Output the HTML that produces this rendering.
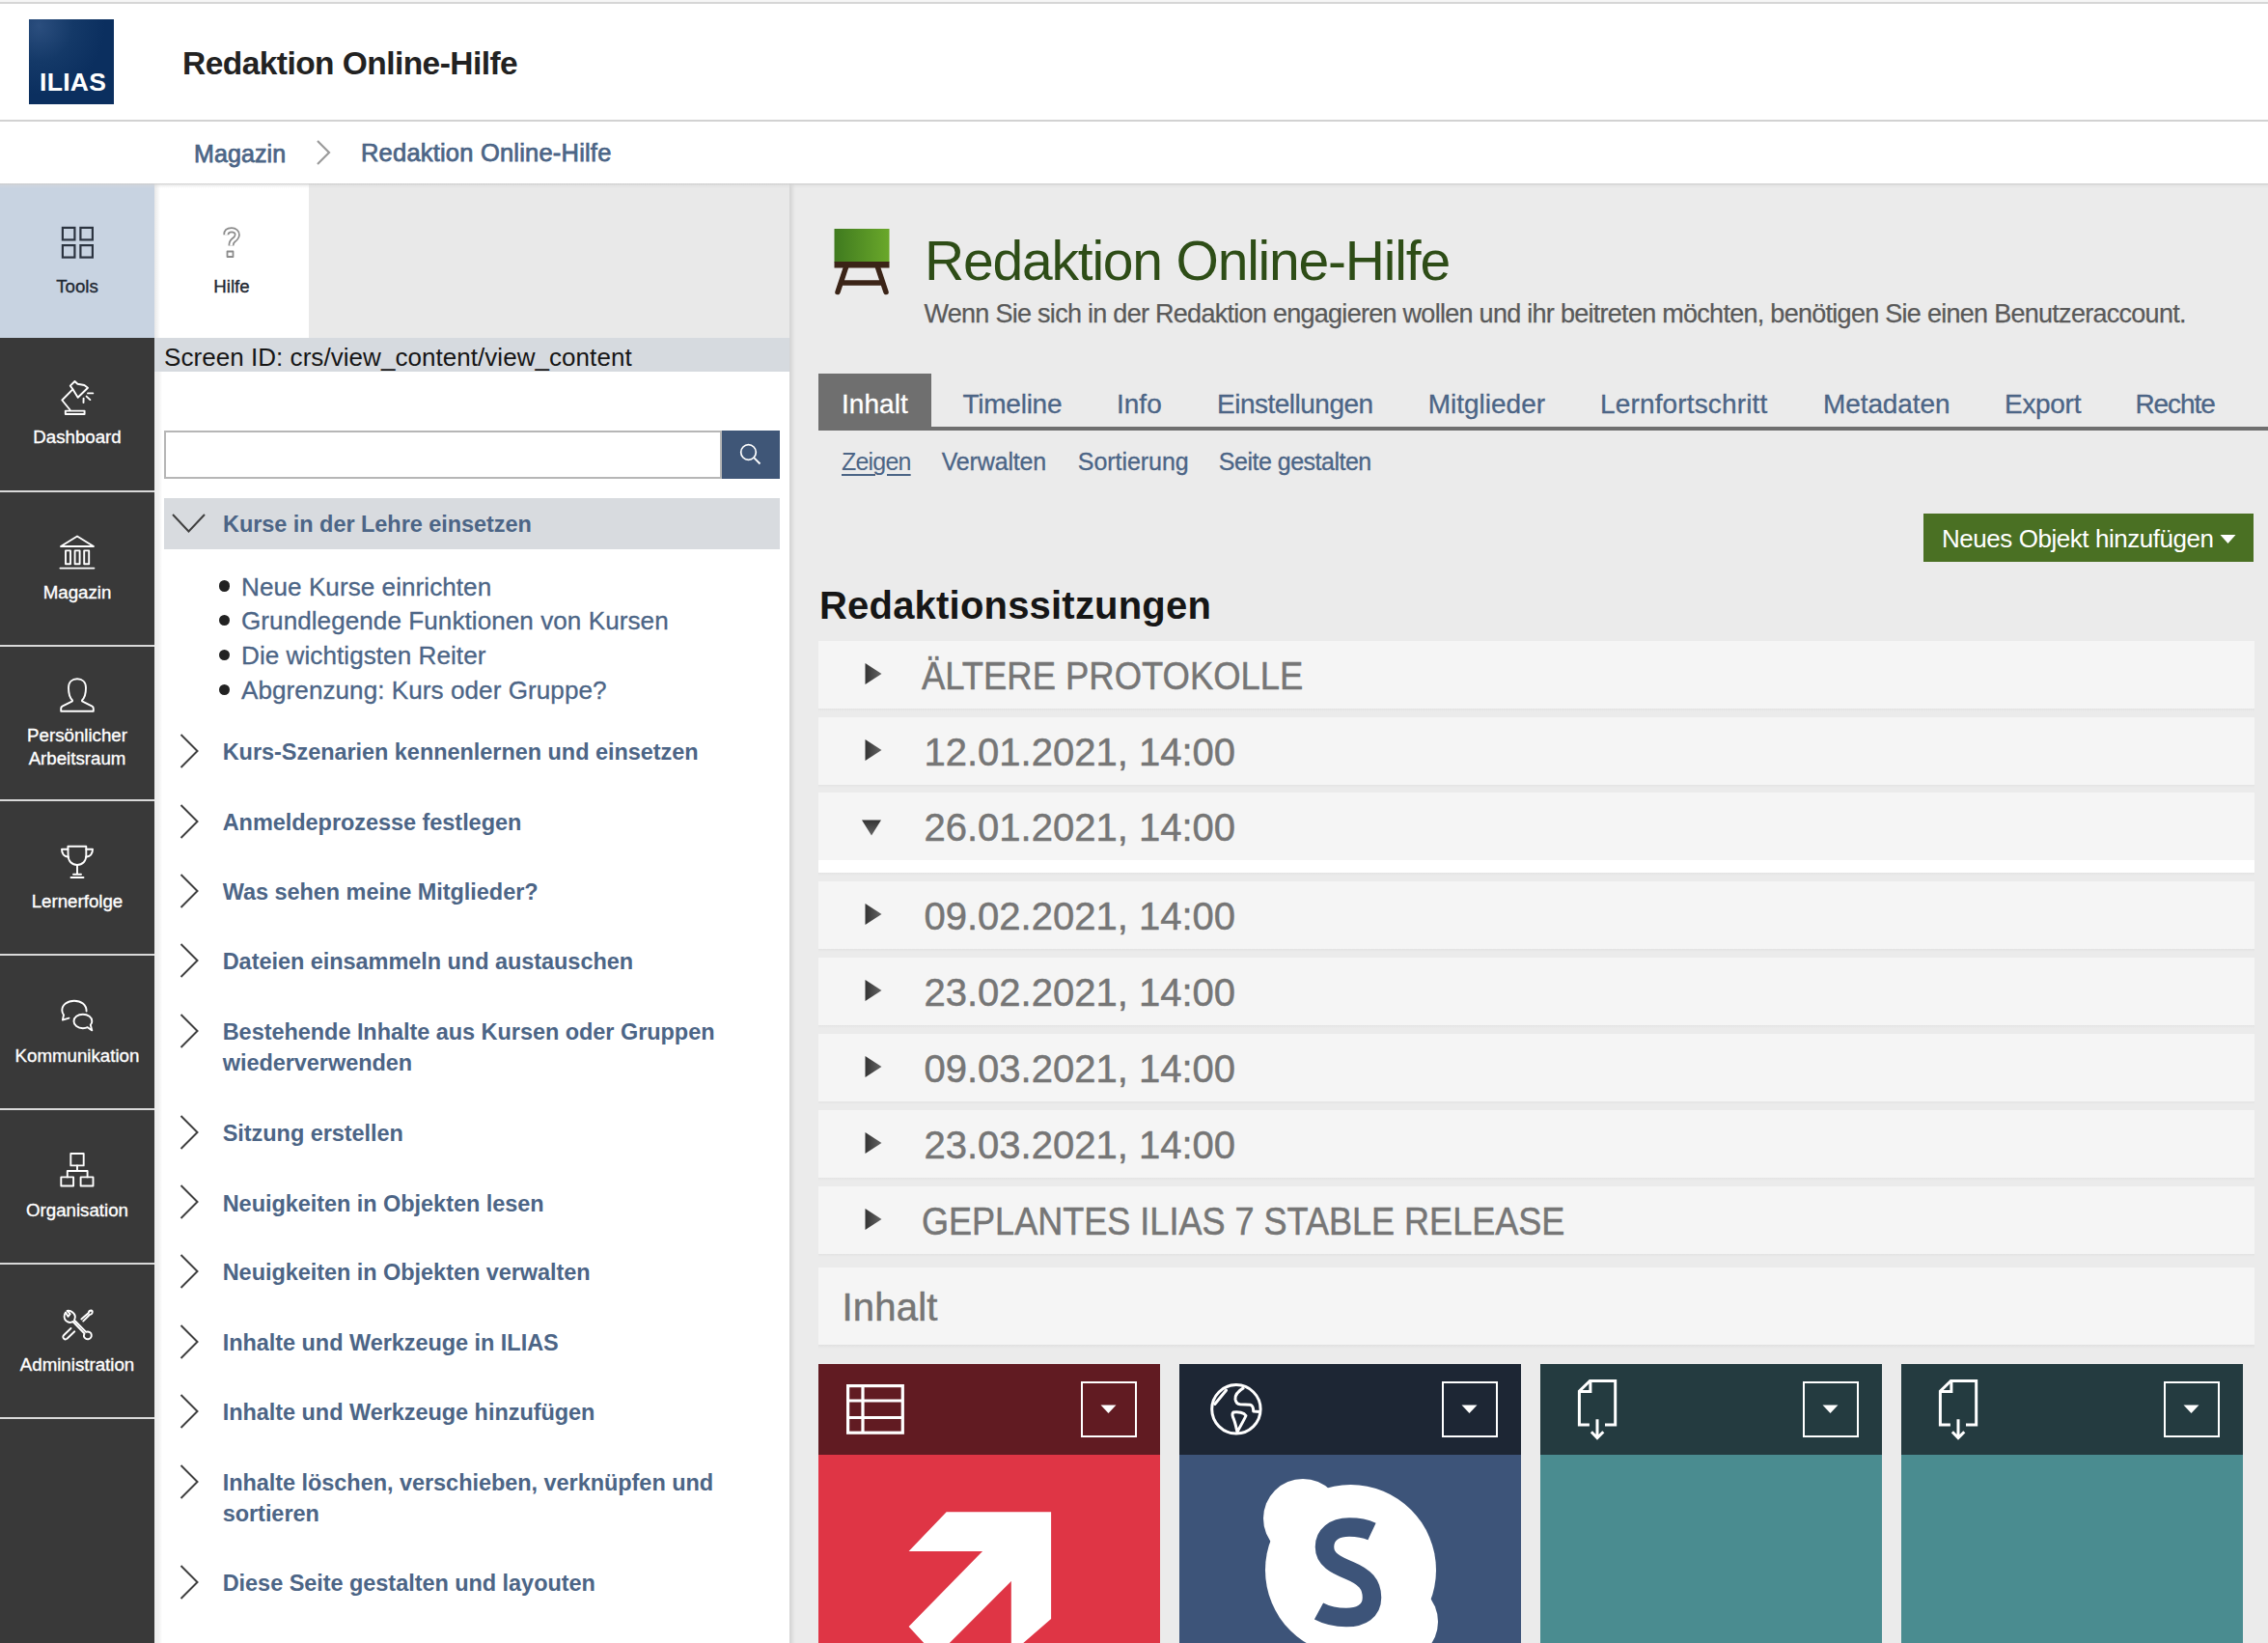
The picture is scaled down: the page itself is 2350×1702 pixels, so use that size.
<!DOCTYPE html>
<html><head><meta charset="utf-8"><title>ILIAS</title>
<style>
html,body{margin:0;padding:0;width:2350px;height:1702px;overflow:hidden;background:#ebebeb;font-family:"Liberation Sans",sans-serif;}
.t{position:absolute;white-space:nowrap;}
.r{position:absolute;}
svg.r{overflow:visible;}
</style></head><body>
<div class="r" style="left:0px;top:0px;width:2350px;height:2px;background:#f6f6f6;"></div>
<div class="r" style="left:0px;top:2px;width:2350px;height:2px;background:#d6d6d6;"></div>
<div class="r" style="left:0px;top:4px;width:2350px;height:120px;background:#ffffff;"></div>
<div class="r" style="left:0px;top:124px;width:2350px;height:2px;background:#d2d2d2;"></div>
<div class="r" style="left:0px;top:126px;width:2350px;height:64px;background:#ffffff;"></div>
<div class="r" style="left:30px;top:20px;width:88px;height:88px;background:radial-gradient(ellipse at 12% 8%, #2b4e7e 0%, #143968 32%, #0b2f5f 62%);"></div>
<div class="t" style="left:41px;top:71.9px;font-size:26.5px;line-height:26.5px;font-weight:700;color:#ffffff;letter-spacing:0.3px;">ILIAS</div>
<div class="t" style="left:189px;top:49.2px;font-size:33.5px;line-height:33.5px;font-weight:700;color:#222222;letter-spacing:-0.55px;">Redaktion Online-Hilfe</div>
<div class="t" style="left:201px;top:146.8px;font-size:25px;line-height:25px;font-weight:400;color:#4c6586;letter-spacing:0.1px;-webkit-text-stroke:0.75px #4c6586;">Magazin</div>
<svg class="r" style="left:326px;top:144px" width="20" height="28" viewBox="0 0 20 28"><polyline points="3,2 15,14 3,26" fill="none" stroke="#9b9b9b" stroke-width="2.2"/></svg>
<div class="t" style="left:374px;top:146.4px;font-size:25.5px;line-height:25.5px;font-weight:400;color:#4c6586;letter-spacing:0.2px;-webkit-text-stroke:0.75px #4c6586;">Redaktion Online-Hilfe</div>
<div class="r" style="left:0;top:190px;width:2350px;height:5px;background:linear-gradient(#cccccc,#d9d9d960 40%,#ebebeb00);z-index:5"></div>
<div class="r" style="left:0px;top:190px;width:160px;height:160px;background:#c8d3e1;"></div>
<div class="r" style="left:0px;top:350px;width:160px;height:1352px;background:#393939;"></div>
<div class="r" style="left:0px;top:508px;width:160px;height:2px;background:#d9d9d9;"></div>
<div class="r" style="left:0px;top:668px;width:160px;height:2px;background:#d9d9d9;"></div>
<div class="r" style="left:0px;top:828px;width:160px;height:2px;background:#d9d9d9;"></div>
<div class="r" style="left:0px;top:988px;width:160px;height:2px;background:#d9d9d9;"></div>
<div class="r" style="left:0px;top:1148px;width:160px;height:2px;background:#d9d9d9;"></div>
<div class="r" style="left:0px;top:1308px;width:160px;height:2px;background:#d9d9d9;"></div>
<div class="r" style="left:0px;top:1468px;width:160px;height:2px;background:#d9d9d9;"></div>
<div class="r" style="left:160px;top:190px;width:658px;height:160px;background:#e9e9e9;"></div>
<div class="r" style="left:160px;top:190px;width:160px;height:160px;background:#ffffff;"></div>
<div class="r" style="left:160px;top:350px;width:658px;height:35px;background:#d6dadf;"></div>
<div class="r" style="left:160px;top:385px;width:658px;height:1317px;background:#ffffff;"></div>
<div class="r" style="left:818px;top:190px;width:6px;height:1512px;background:linear-gradient(90deg,#d3d3d3,#ebebeb);"></div>
<div class="r" style="left:160px;top:385px;width:8px;height:1317px;background:linear-gradient(90deg,#ececec,#f2f2f2 60%,#ffffff00);"></div>
<div class="r" style="left:160px;top:190px;width:6px;height:160px;background:linear-gradient(90deg,#e8e8e8,#ffffff00);"></div>
<div class="r" style="left:824px;top:190px;width:1526px;height:1512px;background:#ebebeb;"></div>
<svg class="r" style="left:60px;top:230px" width="40" height="40" viewBox="0 0 40 40"><rect x="4.9" y="5.9" width="12.5" height="12.5" fill="none" stroke="#2c3440" stroke-width="2.2"/><rect x="23.4" y="5.9" width="12.5" height="12.5" fill="none" stroke="#2c3440" stroke-width="2.2"/><rect x="4.9" y="24.1" width="12.5" height="12.5" fill="none" stroke="#2c3440" stroke-width="2.2"/><rect x="23.4" y="24.1" width="12.5" height="12.5" fill="none" stroke="#2c3440" stroke-width="2.2"/></svg>
<div class="t" style="left:-70px;width:300px;text-align:center;top:288.0px;font-size:18.7px;line-height:18.7px;font-weight:400;color:#1f2933;letter-spacing:0px;-webkit-text-stroke-width:0.35px">Tools</div>
<svg class="r" style="left:220px;top:230px" width="40" height="40" viewBox="0 0 40 40"><g fill="none" stroke-linejoin="round"><path d="M14.3 13.2 C14.3 9.5 16.8 8.3 20 8.3 C23.5 8.3 25.8 10.3 25.8 13.2 C25.8 16 23.8 17.5 21.8 19 C20.2 20.2 19.5 21.5 19.5 24.5" stroke="#8c8c8c" stroke-width="6"/><path d="M14.3 13.2 C14.3 9.5 16.8 8.3 20 8.3 C23.5 8.3 25.8 10.3 25.8 13.2 C25.8 16 23.8 17.5 21.8 19 C20.2 20.2 19.5 21.5 19.5 24.5" stroke="#ffffff" stroke-width="2.6"/><rect x="15.5" y="30.5" width="6" height="5.5" stroke="#8c8c8c" stroke-width="1.8"/></g></svg>
<div class="t" style="left:90px;width:300px;text-align:center;top:288.0px;font-size:18.7px;line-height:18.7px;font-weight:400;color:#1f2933;letter-spacing:0px;-webkit-text-stroke-width:0.35px">Hilfe</div>
<svg class="r" style="left:50px;top:385px" width="60" height="50" viewBox="0 0 60 50"><path d="M27.5 10 L30.4 12.8 L37.4 14 L41 16.7 L30.7 26.8 L25.3 18 L22.8 14.6 Z" fill="none" stroke="#ffffff" stroke-width="1.9" stroke-linejoin="round" stroke-linecap="round"/><path d="M25.3 18.3 L14.3 29.5 L22.5 39.5" fill="none" stroke="#ffffff" stroke-width="1.9" stroke-linejoin="round" stroke-linecap="round"/><rect x="17.8" y="40.6" width="19.8" height="3.4" fill="none" stroke="#ffffff" stroke-width="1.9" stroke-linejoin="round" stroke-linecap="round"/><path d="M41 22.4 L46.3 22.4 M39.6 25.6 L43.4 29.1 M36.6 27.6 L36.5 32" fill="none" stroke="#ffffff" stroke-width="1.9" stroke-linejoin="round" stroke-linecap="round"/></svg>
<div class="t" style="left:-70px;width:300px;text-align:center;top:444.2px;font-size:18.7px;line-height:18.7px;font-weight:400;color:#ffffff;letter-spacing:0px;-webkit-text-stroke-width:0.35px">Dashboard</div>
<svg class="r" style="left:50px;top:545px" width="60" height="50" viewBox="0 0 60 50"><path d="M13 21 L30 10.5 L47 21 Z" fill="none" stroke="#ffffff" stroke-width="1.9" stroke-linejoin="round" stroke-linecap="round"/><rect x="18" y="25.4" width="5" height="13.8" fill="none" stroke="#ffffff" stroke-width="1.9" stroke-linejoin="round" stroke-linecap="round"/><rect x="27.6" y="25.4" width="5" height="13.8" fill="none" stroke="#ffffff" stroke-width="1.9" stroke-linejoin="round" stroke-linecap="round"/><rect x="37.2" y="25.4" width="5" height="13.8" fill="none" stroke="#ffffff" stroke-width="1.9" stroke-linejoin="round" stroke-linecap="round"/><path d="M12.4 43.6 L47.4 43.6" fill="none" stroke="#ffffff" stroke-width="1.9" stroke-linejoin="round" stroke-linecap="round"/></svg>
<div class="t" style="left:-70px;width:300px;text-align:center;top:605.2px;font-size:18.7px;line-height:18.7px;font-weight:400;color:#ffffff;letter-spacing:0px;-webkit-text-stroke-width:0.35px">Magazin</div>
<svg class="r" style="left:50px;top:695px" width="60" height="50" viewBox="0 0 60 50"><path d="M25 30.5 C22 27.5 21 23 21 17.5 C21 11.5 24.8 8.3 30 8.3 C35.2 8.3 39 11.5 39 17.5 C39 23 38 27.5 35 30.5 L35 31.3 L45.5 36.6 C46.5 37.2 46.8 38 46.8 39 L46.8 41.7 L13.2 41.7 L13.2 39 C13.2 38 13.5 37.2 14.5 36.6 L25 31.3 Z" fill="none" stroke="#ffffff" stroke-width="1.9" stroke-linejoin="round" stroke-linecap="round"/></svg>
<div class="t" style="left:-70px;width:300px;text-align:center;top:753.2px;font-size:18.7px;line-height:18.7px;font-weight:400;color:#ffffff;letter-spacing:0px;-webkit-text-stroke-width:0.35px">Persönlicher</div>
<div class="t" style="left:-70px;width:300px;text-align:center;top:776.7px;font-size:18.7px;line-height:18.7px;font-weight:400;color:#ffffff;letter-spacing:0px;-webkit-text-stroke-width:0.35px">Arbeitsraum</div>
<svg class="r" style="left:50px;top:860px" width="60" height="55" viewBox="0 0 60 55"><path d="M20.4 16.7 L39.3 16.7 L39.3 26 C39.3 32 35.5 36 30 36 C24.5 36 20.6 32 20.6 26 Z" fill="none" stroke="#ffffff" stroke-width="1.9" stroke-linejoin="round" stroke-linecap="round"/><path d="M20.5 19.8 L14 19.8 C14 24 16 27 20.6 27.8 M39.3 19.8 L46 19.8 C46 24 44 27 39.3 27.8" fill="none" stroke="#ffffff" stroke-width="1.9" stroke-linejoin="round" stroke-linecap="round"/><path d="M30 36 L30 45.5 M26 45.7 L34 45.7 M23.5 49 L36.5 49" fill="none" stroke="#ffffff" stroke-width="1.9" stroke-linejoin="round" stroke-linecap="round"/></svg>
<div class="t" style="left:-70px;width:300px;text-align:center;top:925.0px;font-size:18.7px;line-height:18.7px;font-weight:400;color:#ffffff;letter-spacing:0px;-webkit-text-stroke-width:0.35px">Lernerfolge</div>
<svg class="r" style="left:50px;top:1025px" width="60" height="50" viewBox="0 0 60 50"><path d="M39.6 22.5 C39.6 15.8 34 11.7 26.9 11.7 C19.8 11.7 14.3 16 14.3 21.5 C14.3 23.5 15 25 16 26.3 L14.9 31.6 L21.5 29.6" fill="none" stroke="#ffffff" stroke-width="1.9" stroke-linejoin="round" stroke-linecap="round"/><path d="M40.8 39.2 C39.2 40 37.5 40.2 35.9 40.2 C30.5 40.2 26.5 37 26.5 32.9 C26.5 28.8 30.5 25.8 35.9 25.8 C41.2 25.8 45.3 28.8 45.3 32.9 C45.3 34.6 44.6 35.8 43.8 36.7 L45.3 42.4 Z" fill="none" stroke="#ffffff" stroke-width="1.9" stroke-linejoin="round" stroke-linecap="round"/></svg>
<div class="t" style="left:-70px;width:300px;text-align:center;top:1085.2px;font-size:18.7px;line-height:18.7px;font-weight:400;color:#ffffff;letter-spacing:0px;-webkit-text-stroke-width:0.35px">Kommunikation</div>
<svg class="r" style="left:20px;top:1180px" width="120" height="60" viewBox="0 0 120 60"><rect x="53.3" y="15" width="13.4" height="12.4" fill="none" stroke="#ffffff" stroke-width="1.9" stroke-linejoin="round" stroke-linecap="round"/><path d="M60 27.4 L60 33 M49.8 39.4 L49.8 33 L70.6 33 L70.6 39.4" fill="none" stroke="#ffffff" stroke-width="1.9" stroke-linejoin="round" stroke-linecap="round"/><rect x="43.3" y="39.4" width="12.8" height="9.1" fill="none" stroke="#ffffff" stroke-width="1.9" stroke-linejoin="round" stroke-linecap="round"/><rect x="63.6" y="39.4" width="12.9" height="9.1" fill="none" stroke="#ffffff" stroke-width="1.9" stroke-linejoin="round" stroke-linecap="round"/></svg>
<div class="t" style="left:-70px;width:300px;text-align:center;top:1244.7px;font-size:18.7px;line-height:18.7px;font-weight:400;color:#ffffff;letter-spacing:0px;-webkit-text-stroke-width:0.35px">Organisation</div>
<svg class="r" style="left:20px;top:1340px" width="120" height="60" viewBox="0 0 120 60"><path d="M48 19.5 C46 22 46 26 48.5 28.3 C51 30.3 54 30 55.5 29 L67.5 41.5 C66.5 43.5 67 45.5 68.5 46.5 C70.3 47.8 72.8 47.5 74 45.8 C75.3 44 75 41.5 73.3 40.3 C72 39.4 70.5 39.2 69.2 39.8 L57 27.5 C58.3 25 57.8 21.6 55.3 19.5 C53.4 17.8 51.4 17.3 49.5 17.8 L52.7 21.2 L50.5 23.8 Z" fill="none" stroke="#ffffff" stroke-width="1.9" stroke-linejoin="round" stroke-linecap="round"/><path d="M64.3 26.5 L71.8 20 C72 18.5 73 17.5 74.5 17.5 C75.5 17.8 76 18.6 75.6 20 C75.2 21.3 74 22 72.8 22 L66.2 28.6" fill="none" stroke="#ffffff" stroke-width="1.9" stroke-linejoin="round" stroke-linecap="round"/><path d="M53.5 36 L46 43.2 C45 44.2 45 45.8 46.2 46.8 C47.2 47.7 48.6 47.6 49.5 46.7 L57.3 39.3" fill="none" stroke="#ffffff" stroke-width="1.9" stroke-linejoin="round" stroke-linecap="round"/></svg>
<div class="t" style="left:-70px;width:300px;text-align:center;top:1405.0px;font-size:18.7px;line-height:18.7px;font-weight:400;color:#ffffff;letter-spacing:0px;-webkit-text-stroke-width:0.35px">Administration</div>
<div class="t" style="left:170px;top:356.5px;font-size:26px;line-height:26px;font-weight:400;color:#161616;letter-spacing:0.05px;">Screen ID: crs/view_content/view_content</div>
<div class="r" style="left:170px;top:446px;width:574px;height:46px;border:2px solid #b6b6b6;background:#fff"></div>
<div class="r" style="left:748px;top:446px;width:60px;height:50px;background:#3f5677;"></div>
<svg class="r" style="left:763px;top:456px" width="30" height="30" viewBox="0 0 30 30"><circle cx="12.5" cy="12.5" r="7.8" fill="none" stroke="#fff" stroke-width="1.7"/><path d="M18.2 18.2 L24.5 24.5" stroke="#fff" stroke-width="1.9"/></svg>
<div class="r" style="left:170px;top:516px;width:638px;height:53px;background:#d8dbdf;"></div>
<svg class="r" style="left:176px;top:528px" width="40" height="30" viewBox="0 0 40 30"><polyline points="3,5 19.5,22.5 36,5" fill="none" stroke="#404040" stroke-width="2"/></svg>
<div class="t" style="left:231px;top:532.1px;font-size:23.5px;line-height:23.5px;font-weight:700;color:#4c6586;letter-spacing:-0.05px;">Kurse in der Lehre einsetzen</div>
<div class="r" style="left:226.5px;top:601.1px;width:11.5px;height:11.5px;border-radius:50%;background:#222"></div>
<div class="t" style="left:250px;top:594.5px;font-size:26.1px;line-height:26.1px;font-weight:400;color:#4c6586;letter-spacing:0.05px;-webkit-text-stroke-width:0.3px;">Neue Kurse einrichten</div>
<div class="r" style="left:226.5px;top:636.9px;width:11.5px;height:11.5px;border-radius:50%;background:#222"></div>
<div class="t" style="left:250px;top:630.3px;font-size:26.1px;line-height:26.1px;font-weight:400;color:#4c6586;letter-spacing:0.05px;-webkit-text-stroke-width:0.3px;">Grundlegende Funktionen von Kursen</div>
<div class="r" style="left:226.5px;top:672.7px;width:11.5px;height:11.5px;border-radius:50%;background:#222"></div>
<div class="t" style="left:250px;top:666.1px;font-size:26.1px;line-height:26.1px;font-weight:400;color:#4c6586;letter-spacing:0.05px;-webkit-text-stroke-width:0.3px;">Die wichtigsten Reiter</div>
<div class="r" style="left:226.5px;top:708.5px;width:11.5px;height:11.5px;border-radius:50%;background:#222"></div>
<div class="t" style="left:250px;top:701.9px;font-size:26.1px;line-height:26.1px;font-weight:400;color:#4c6586;letter-spacing:0.05px;-webkit-text-stroke-width:0.3px;">Abgrenzung: Kurs oder Gruppe?</div>
<svg class="r" style="left:183px;top:758.3px" width="28" height="40" viewBox="0 0 28 40"><polyline points="4.5,3 21.5,20 4.5,37" fill="none" stroke="#404040" stroke-width="2"/></svg>
<div class="t" style="left:230.7px;top:768.4px;font-size:23.5px;line-height:23.5px;font-weight:700;color:#4c6586;letter-spacing:-0.05px;">Kurs-Szenarien kennenlernen und einsetzen</div>
<svg class="r" style="left:183px;top:831px" width="28" height="40" viewBox="0 0 28 40"><polyline points="4.5,3 21.5,20 4.5,37" fill="none" stroke="#404040" stroke-width="2"/></svg>
<div class="t" style="left:230.7px;top:841.1px;font-size:23.5px;line-height:23.5px;font-weight:700;color:#4c6586;letter-spacing:-0.05px;">Anmeldeprozesse festlegen</div>
<svg class="r" style="left:183px;top:903.2px" width="28" height="40" viewBox="0 0 28 40"><polyline points="4.5,3 21.5,20 4.5,37" fill="none" stroke="#404040" stroke-width="2"/></svg>
<div class="t" style="left:230.7px;top:913.3px;font-size:23.5px;line-height:23.5px;font-weight:700;color:#4c6586;letter-spacing:-0.05px;">Was sehen meine Mitglieder?</div>
<svg class="r" style="left:183px;top:975px" width="28" height="40" viewBox="0 0 28 40"><polyline points="4.5,3 21.5,20 4.5,37" fill="none" stroke="#404040" stroke-width="2"/></svg>
<div class="t" style="left:230.7px;top:985.1px;font-size:23.5px;line-height:23.5px;font-weight:700;color:#4c6586;letter-spacing:-0.05px;">Dateien einsammeln und austauschen</div>
<svg class="r" style="left:183px;top:1048px" width="28" height="40" viewBox="0 0 28 40"><polyline points="4.5,3 21.5,20 4.5,37" fill="none" stroke="#404040" stroke-width="2"/></svg>
<div class="t" style="left:230.7px;top:1058.1px;font-size:23.5px;line-height:23.5px;font-weight:700;color:#4c6586;letter-spacing:-0.05px;">Bestehende Inhalte aus Kursen oder Gruppen</div>
<div class="t" style="left:230.7px;top:1090.1px;font-size:23.5px;line-height:23.5px;font-weight:700;color:#4c6586;letter-spacing:-0.05px;">wiederverwenden</div>
<svg class="r" style="left:183px;top:1152.6px" width="28" height="40" viewBox="0 0 28 40"><polyline points="4.5,3 21.5,20 4.5,37" fill="none" stroke="#404040" stroke-width="2"/></svg>
<div class="t" style="left:230.7px;top:1162.7px;font-size:23.5px;line-height:23.5px;font-weight:700;color:#4c6586;letter-spacing:-0.05px;">Sitzung erstellen</div>
<svg class="r" style="left:183px;top:1225.4px" width="28" height="40" viewBox="0 0 28 40"><polyline points="4.5,3 21.5,20 4.5,37" fill="none" stroke="#404040" stroke-width="2"/></svg>
<div class="t" style="left:230.7px;top:1235.5px;font-size:23.5px;line-height:23.5px;font-weight:700;color:#4c6586;letter-spacing:-0.05px;">Neuigkeiten in Objekten lesen</div>
<svg class="r" style="left:183px;top:1297.3px" width="28" height="40" viewBox="0 0 28 40"><polyline points="4.5,3 21.5,20 4.5,37" fill="none" stroke="#404040" stroke-width="2"/></svg>
<div class="t" style="left:230.7px;top:1307.4px;font-size:23.5px;line-height:23.5px;font-weight:700;color:#4c6586;letter-spacing:-0.05px;">Neuigkeiten in Objekten verwalten</div>
<svg class="r" style="left:183px;top:1369.7px" width="28" height="40" viewBox="0 0 28 40"><polyline points="4.5,3 21.5,20 4.5,37" fill="none" stroke="#404040" stroke-width="2"/></svg>
<div class="t" style="left:230.7px;top:1379.8px;font-size:23.5px;line-height:23.5px;font-weight:700;color:#4c6586;letter-spacing:-0.05px;">Inhalte und Werkzeuge in ILIAS</div>
<svg class="r" style="left:183px;top:1441.5px" width="28" height="40" viewBox="0 0 28 40"><polyline points="4.5,3 21.5,20 4.5,37" fill="none" stroke="#404040" stroke-width="2"/></svg>
<div class="t" style="left:230.7px;top:1451.6px;font-size:23.5px;line-height:23.5px;font-weight:700;color:#4c6586;letter-spacing:-0.05px;">Inhalte und Werkzeuge hinzufügen</div>
<svg class="r" style="left:183px;top:1515px" width="28" height="40" viewBox="0 0 28 40"><polyline points="4.5,3 21.5,20 4.5,37" fill="none" stroke="#404040" stroke-width="2"/></svg>
<div class="t" style="left:230.7px;top:1525.1px;font-size:23.5px;line-height:23.5px;font-weight:700;color:#4c6586;letter-spacing:-0.05px;">Inhalte löschen, verschieben, verknüpfen und</div>
<div class="t" style="left:230.7px;top:1557.1px;font-size:23.5px;line-height:23.5px;font-weight:700;color:#4c6586;letter-spacing:-0.05px;">sortieren</div>
<svg class="r" style="left:183px;top:1618.5px" width="28" height="40" viewBox="0 0 28 40"><polyline points="4.5,3 21.5,20 4.5,37" fill="none" stroke="#404040" stroke-width="2"/></svg>
<div class="t" style="left:230.7px;top:1628.6px;font-size:23.5px;line-height:23.5px;font-weight:700;color:#4c6586;letter-spacing:-0.05px;">Diese Seite gestalten und layouten</div>
<svg class="r" style="left:860px;top:232px" width="66" height="78" viewBox="0 0 66 78"><defs><linearGradient id="gb" x1="0" x2="1" y1="0" y2="0"><stop offset="0" stop-color="#3f7a1f"/><stop offset="1" stop-color="#6aa82a"/></linearGradient></defs><rect x="4.5" y="5" width="57" height="34.5" fill="url(#gb)"/><rect x="4.5" y="39" width="57" height="6.5" fill="#3b2417"/><path d="M16.5 45 L8 70.5 M49.5 45 L58 70.5 M12 61 L54 61" stroke="#3b2417" stroke-width="5.5" stroke-linecap="round" fill="none"/></svg>
<div class="t" style="left:958px;top:241.7px;font-size:57px;line-height:57px;font-weight:400;color:#2e4d17;letter-spacing:-1.2px;">Redaktion Online-Hilfe</div>
<div class="t" style="left:957.5px;top:312.1px;font-size:27px;line-height:27px;font-weight:400;color:#5a5a5a;letter-spacing:-0.72px;-webkit-text-stroke-width:0.25px;">Wenn Sie sich in der Redaktion engagieren wollen und ihr beitreten möchten, benötigen Sie einen Benutzeraccount.</div>
<div class="r" style="left:848px;top:387px;width:117px;height:56px;background:#6f6f6f;"></div>
<div class="r" style="left:848px;top:442px;width:1502px;height:4px;background:#6f6f6f;"></div>
<div class="t" style="left:872px;top:404.7px;font-size:28px;line-height:28px;font-weight:400;color:#ffffff;letter-spacing:0.05px;-webkit-text-stroke-width:0.3px;">Inhalt</div>
<div class="t" style="left:997.5px;top:404.7px;font-size:28px;line-height:28px;font-weight:400;color:#4c6586;letter-spacing:-0.25px;-webkit-text-stroke-width:0.3px;">Timeline</div>
<div class="t" style="left:1157px;top:404.7px;font-size:28px;line-height:28px;font-weight:400;color:#4c6586;letter-spacing:0px;-webkit-text-stroke-width:0.3px;">Info</div>
<div class="t" style="left:1261px;top:404.7px;font-size:28px;line-height:28px;font-weight:400;color:#4c6586;letter-spacing:-0.5px;-webkit-text-stroke-width:0.3px;">Einstellungen</div>
<div class="t" style="left:1479.7px;top:404.7px;font-size:28px;line-height:28px;font-weight:400;color:#4c6586;letter-spacing:0px;-webkit-text-stroke-width:0.3px;">Mitglieder</div>
<div class="t" style="left:1658px;top:404.7px;font-size:28px;line-height:28px;font-weight:400;color:#4c6586;letter-spacing:0.15px;-webkit-text-stroke-width:0.3px;">Lernfortschritt</div>
<div class="t" style="left:1889px;top:404.7px;font-size:28px;line-height:28px;font-weight:400;color:#4c6586;letter-spacing:-0.1px;-webkit-text-stroke-width:0.3px;">Metadaten</div>
<div class="t" style="left:2077px;top:404.7px;font-size:28px;line-height:28px;font-weight:400;color:#4c6586;letter-spacing:-0.3px;-webkit-text-stroke-width:0.3px;">Export</div>
<div class="t" style="left:2212.5px;top:404.7px;font-size:28px;line-height:28px;font-weight:400;color:#4c6586;letter-spacing:-1.1px;-webkit-text-stroke-width:0.3px;">Rechte</div>
<div class="t" style="left:872px;top:466.4px;font-size:25px;line-height:25px;font-weight:400;color:#4c6586;letter-spacing:-0.8px;text-decoration:underline;text-underline-offset:4px;text-decoration-thickness:1.5px;">Zeigen</div>
<div class="t" style="left:975.7px;top:466.4px;font-size:25px;line-height:25px;font-weight:400;color:#4c6586;letter-spacing:-0.15px;-webkit-text-stroke-width:0.3px;">Verwalten</div>
<div class="t" style="left:1116.8px;top:466.4px;font-size:25px;line-height:25px;font-weight:400;color:#4c6586;letter-spacing:-0.05px;-webkit-text-stroke-width:0.3px;">Sortierung</div>
<div class="t" style="left:1262.8px;top:466.4px;font-size:25px;line-height:25px;font-weight:400;color:#4c6586;letter-spacing:-0.5px;-webkit-text-stroke-width:0.3px;">Seite gestalten</div>
<div class="r" style="left:1993px;top:532px;width:342px;height:49.5px;background:#4a7023;"></div>
<div class="t" style="left:2012px;top:544.5px;font-size:26px;line-height:26px;font-weight:400;color:#ffffff;letter-spacing:-0.45px;">Neues Objekt hinzufügen</div>
<svg class="r" style="left:2300px;top:553px" width="17" height="11" viewBox="0 0 17 11"><path d="M0.5 1 L16.5 1 L8.5 10 Z" fill="#fff"/></svg>
<div class="t" style="left:849px;top:607.1px;font-size:40px;line-height:40px;font-weight:700;color:#161616;letter-spacing:0.2px;">Redaktionssitzungen</div>
<div class="r" style="left:848px;top:664px;width:1488px;height:69.5px;background:#f5f5f5;"></div>
<div class="r" style="left:848px;top:733.5px;width:1488px;height:3px;background:linear-gradient(#e3e3e3,#ebebeb)"></div>
<svg class="r" style="left:895px;top:686px" width="20" height="24" viewBox="0 0 20 24"><defs><linearGradient id="tg664" x1="0" x2="1" y1="0" y2="0"><stop offset="0" stop-color="#333"/><stop offset="1" stop-color="#666"/></linearGradient></defs><path d="M1.5 1 L18.5 12 L1.5 23 Z" fill="url(#tg664)"/></svg>
<div class="t" style="left:955px;top:679.8px;font-size:40px;line-height:40px;font-weight:400;color:#767676;letter-spacing:0px;transform:scaleX(0.9104);transform-origin:0 0;-webkit-text-stroke-width:0.5px;">ÄLTERE PROTOKOLLE</div>
<div class="r" style="left:848px;top:743px;width:1488px;height:69.5px;background:#f5f5f5;"></div>
<div class="r" style="left:848px;top:812.5px;width:1488px;height:3px;background:linear-gradient(#e3e3e3,#ebebeb)"></div>
<svg class="r" style="left:895px;top:765px" width="20" height="24" viewBox="0 0 20 24"><defs><linearGradient id="tg743" x1="0" x2="1" y1="0" y2="0"><stop offset="0" stop-color="#333"/><stop offset="1" stop-color="#666"/></linearGradient></defs><path d="M1.5 1 L18.5 12 L1.5 23 Z" fill="url(#tg743)"/></svg>
<div class="t" style="left:957.5px;top:759.1px;font-size:40px;line-height:40px;font-weight:400;color:#767676;letter-spacing:0.0px;-webkit-text-stroke-width:0.5px;">12.01.2021, 14:00</div>
<div class="r" style="left:848px;top:821px;width:1488px;height:69.5px;background:#f5f5f5;"></div>
<div class="r" style="left:848px;top:890.5px;width:1488px;height:13px;background:#ffffff;"></div>
<div class="r" style="left:848px;top:903.5px;width:1488px;height:3px;background:linear-gradient(#e3e3e3,#ebebeb)"></div>
<svg class="r" style="left:892px;top:848px" width="22" height="18" viewBox="0 0 22 18"><defs><linearGradient id="tg821" x1="0" x2="0" y1="0" y2="1"><stop offset="0" stop-color="#333"/><stop offset="1" stop-color="#666"/></linearGradient></defs><path d="M1 1.5 L21 1.5 L11 17.5 Z" fill="url(#tg821)"/></svg>
<div class="t" style="left:957.5px;top:837.1px;font-size:40px;line-height:40px;font-weight:400;color:#767676;letter-spacing:0.0px;-webkit-text-stroke-width:0.5px;">26.01.2021, 14:00</div>
<div class="r" style="left:848px;top:913px;width:1488px;height:69.5px;background:#f5f5f5;"></div>
<div class="r" style="left:848px;top:982.5px;width:1488px;height:3px;background:linear-gradient(#e3e3e3,#ebebeb)"></div>
<svg class="r" style="left:895px;top:935px" width="20" height="24" viewBox="0 0 20 24"><defs><linearGradient id="tg913" x1="0" x2="1" y1="0" y2="0"><stop offset="0" stop-color="#333"/><stop offset="1" stop-color="#666"/></linearGradient></defs><path d="M1.5 1 L18.5 12 L1.5 23 Z" fill="url(#tg913)"/></svg>
<div class="t" style="left:957.5px;top:929.1px;font-size:40px;line-height:40px;font-weight:400;color:#767676;letter-spacing:0.0px;-webkit-text-stroke-width:0.5px;">09.02.2021, 14:00</div>
<div class="r" style="left:848px;top:992px;width:1488px;height:69.5px;background:#f5f5f5;"></div>
<div class="r" style="left:848px;top:1061.5px;width:1488px;height:3px;background:linear-gradient(#e3e3e3,#ebebeb)"></div>
<svg class="r" style="left:895px;top:1014px" width="20" height="24" viewBox="0 0 20 24"><defs><linearGradient id="tg992" x1="0" x2="1" y1="0" y2="0"><stop offset="0" stop-color="#333"/><stop offset="1" stop-color="#666"/></linearGradient></defs><path d="M1.5 1 L18.5 12 L1.5 23 Z" fill="url(#tg992)"/></svg>
<div class="t" style="left:957.5px;top:1008.1px;font-size:40px;line-height:40px;font-weight:400;color:#767676;letter-spacing:0.0px;-webkit-text-stroke-width:0.5px;">23.02.2021, 14:00</div>
<div class="r" style="left:848px;top:1071px;width:1488px;height:69.5px;background:#f5f5f5;"></div>
<div class="r" style="left:848px;top:1140.5px;width:1488px;height:3px;background:linear-gradient(#e3e3e3,#ebebeb)"></div>
<svg class="r" style="left:895px;top:1093px" width="20" height="24" viewBox="0 0 20 24"><defs><linearGradient id="tg1071" x1="0" x2="1" y1="0" y2="0"><stop offset="0" stop-color="#333"/><stop offset="1" stop-color="#666"/></linearGradient></defs><path d="M1.5 1 L18.5 12 L1.5 23 Z" fill="url(#tg1071)"/></svg>
<div class="t" style="left:957.5px;top:1087.1px;font-size:40px;line-height:40px;font-weight:400;color:#767676;letter-spacing:0.0px;-webkit-text-stroke-width:0.5px;">09.03.2021, 14:00</div>
<div class="r" style="left:848px;top:1150px;width:1488px;height:69.5px;background:#f5f5f5;"></div>
<div class="r" style="left:848px;top:1219.5px;width:1488px;height:3px;background:linear-gradient(#e3e3e3,#ebebeb)"></div>
<svg class="r" style="left:895px;top:1172px" width="20" height="24" viewBox="0 0 20 24"><defs><linearGradient id="tg1150" x1="0" x2="1" y1="0" y2="0"><stop offset="0" stop-color="#333"/><stop offset="1" stop-color="#666"/></linearGradient></defs><path d="M1.5 1 L18.5 12 L1.5 23 Z" fill="url(#tg1150)"/></svg>
<div class="t" style="left:957.5px;top:1166.1px;font-size:40px;line-height:40px;font-weight:400;color:#767676;letter-spacing:0.0px;-webkit-text-stroke-width:0.5px;">23.03.2021, 14:00</div>
<div class="r" style="left:848px;top:1229px;width:1488px;height:69.5px;background:#f5f5f5;"></div>
<div class="r" style="left:848px;top:1298.5px;width:1488px;height:3px;background:linear-gradient(#e3e3e3,#ebebeb)"></div>
<svg class="r" style="left:895px;top:1251px" width="20" height="24" viewBox="0 0 20 24"><defs><linearGradient id="tg1229" x1="0" x2="1" y1="0" y2="0"><stop offset="0" stop-color="#333"/><stop offset="1" stop-color="#666"/></linearGradient></defs><path d="M1.5 1 L18.5 12 L1.5 23 Z" fill="url(#tg1229)"/></svg>
<div class="t" style="left:955px;top:1244.8px;font-size:40px;line-height:40px;font-weight:400;color:#767676;letter-spacing:0px;transform:scaleX(0.901);transform-origin:0 0;-webkit-text-stroke-width:0.5px;">GEPLANTES ILIAS 7 STABLE RELEASE</div>
<div class="r" style="left:848px;top:1312.5px;width:1488px;height:80.5px;background:#f5f5f5;"></div>
<div class="r" style="left:848px;top:1393px;width:1488px;height:4px;background:linear-gradient(#e0e0e0,#ebebeb)"></div>
<div class="t" style="left:872.5px;top:1334.1px;font-size:40px;line-height:40px;font-weight:400;color:#767676;letter-spacing:0.2px;-webkit-text-stroke-width:0.5px;">Inhalt</div>
<div class="r" style="left:848px;top:1413px;width:354px;height:94px;background:#611b22;"></div>
<div class="r" style="left:848px;top:1507px;width:354px;height:195px;background:#df3545;"></div>
<div class="r" style="left:1120px;top:1431px;width:54px;height:54px;border:2px solid #fff"></div>
<svg class="r" style="left:1140px;top:1455px" width="17" height="10" viewBox="0 0 17 10"><path d="M0.5 0.5 L16.5 0.5 L8.5 9 Z" fill="#fff"/></svg>
<div class="r" style="left:1222px;top:1413px;width:354px;height:94px;background:#1d2634;"></div>
<div class="r" style="left:1222px;top:1507px;width:354px;height:195px;background:#3d5479;"></div>
<div class="r" style="left:1494px;top:1431px;width:54px;height:54px;border:2px solid #fff"></div>
<svg class="r" style="left:1514px;top:1455px" width="17" height="10" viewBox="0 0 17 10"><path d="M0.5 0.5 L16.5 0.5 L8.5 9 Z" fill="#fff"/></svg>
<div class="r" style="left:1596px;top:1413px;width:354px;height:94px;background:#243b40;"></div>
<div class="r" style="left:1596px;top:1507px;width:354px;height:195px;background:#4a8c90;"></div>
<div class="r" style="left:1868px;top:1431px;width:54px;height:54px;border:2px solid #fff"></div>
<svg class="r" style="left:1888px;top:1455px" width="17" height="10" viewBox="0 0 17 10"><path d="M0.5 0.5 L16.5 0.5 L8.5 9 Z" fill="#fff"/></svg>
<div class="r" style="left:1970px;top:1413px;width:354px;height:94px;background:#243b40;"></div>
<div class="r" style="left:1970px;top:1507px;width:354px;height:195px;background:#4a8c90;"></div>
<div class="r" style="left:2242px;top:1431px;width:54px;height:54px;border:2px solid #fff"></div>
<svg class="r" style="left:2262px;top:1455px" width="17" height="10" viewBox="0 0 17 10"><path d="M0.5 0.5 L16.5 0.5 L8.5 9 Z" fill="#fff"/></svg>
<svg class="r" style="left:868px;top:1425px" width="80" height="70" viewBox="0 0 80 70"><rect x="10.6" y="10.6" width="56.7" height="48.6" fill="none" stroke="#ffffff" stroke-width="3.2"/><path d="M26 10.6 L26 59.2 M10.6 26 L67.3 26 M10.6 43.5 L67.3 43.5" fill="none" stroke="#ffffff" stroke-width="3.2"/></svg>
<svg class="r" style="left:1245px;top:1425px" width="70" height="70" viewBox="0 0 70 70"><circle cx="35.9" cy="34.8" r="25.2" fill="none" stroke="#ffffff" stroke-width="3"/><path d="M13.8 29.5 L25.5 15.2" fill="none" stroke="#ffffff" stroke-width="3" stroke-linecap="round"/><path d="M44 12.4 C38 16 34.5 20 35 24.5 C35.5 28 37 29.5 40 29.8 L50.5 30.3 C53 31 53.7 33.5 53.7 37 L60 37.5" fill="none" stroke="#ffffff" stroke-width="3" stroke-linejoin="round"/><path d="M33 38 C38 37 44 38.5 46 41.5 C43.5 47 40 52.5 37 58.5 C35.5 52 34.5 47 32.5 43 C31.8 41 31.8 39 33 38 Z" fill="none" stroke="#ffffff" stroke-width="3" stroke-linejoin="round"/></svg>
<svg class="r" style="left:848px;top:1507px" width="354" height="195" viewBox="0 0 354 195"><path d="M132.7 59.3 L241.1 59.3 L241.1 170.1 L212.3 195 L199.8 195 L199.8 131.1 L135.8 195 L109.3 195 L93.6 177.9 L170.1 99.9 L93.6 99.9 Z" fill="#fff"/></svg>
<svg class="r" style="left:1222px;top:1507px" width="354" height="195" viewBox="0 0 354 195"><circle cx="177.5" cy="119.5" r="88.5" fill="#fff"/><circle cx="128" cy="66" r="41" fill="#fff"/><circle cx="227" cy="173" r="41" fill="#fff"/><path d="M199.5 79.5 C192 76 184 75 176 75 C160 75 150.5 83.5 150.5 95.5 C150.5 108.5 162 114 176.5 120 C192 126.5 199.5 134 199.5 148 C199.5 161.5 189 168.5 173 168.5 C162 168.5 152 166 144.5 162" fill="none" stroke="#3d5479" stroke-width="19.5"/></svg>
<svg class="r" style="left:1625px;top:1420px" width="60" height="80" viewBox="0 0 60 80"><path d="M21.9 56 L11.4 56 L11.4 21.2 L22.4 10.5 L48.7 10.5 L48.7 56 L38 56" fill="none" stroke="#ffffff" stroke-width="3"/><path d="M11.4 21.4 L22.9 21.4 L22.9 11" fill="none" stroke="#ffffff" stroke-width="3"/><path d="M30 50.2 L30 69 M23.9 63.3 L30 69.6 L36.3 63.3" fill="none" stroke="#ffffff" stroke-width="3"/></svg>
<svg class="r" style="left:1999px;top:1420px" width="60" height="80" viewBox="0 0 60 80"><path d="M21.9 56 L11.4 56 L11.4 21.2 L22.4 10.5 L48.7 10.5 L48.7 56 L38 56" fill="none" stroke="#ffffff" stroke-width="3"/><path d="M11.4 21.4 L22.9 21.4 L22.9 11" fill="none" stroke="#ffffff" stroke-width="3"/><path d="M30 50.2 L30 69 M23.9 63.3 L30 69.6 L36.3 63.3" fill="none" stroke="#ffffff" stroke-width="3"/></svg>
</body></html>
